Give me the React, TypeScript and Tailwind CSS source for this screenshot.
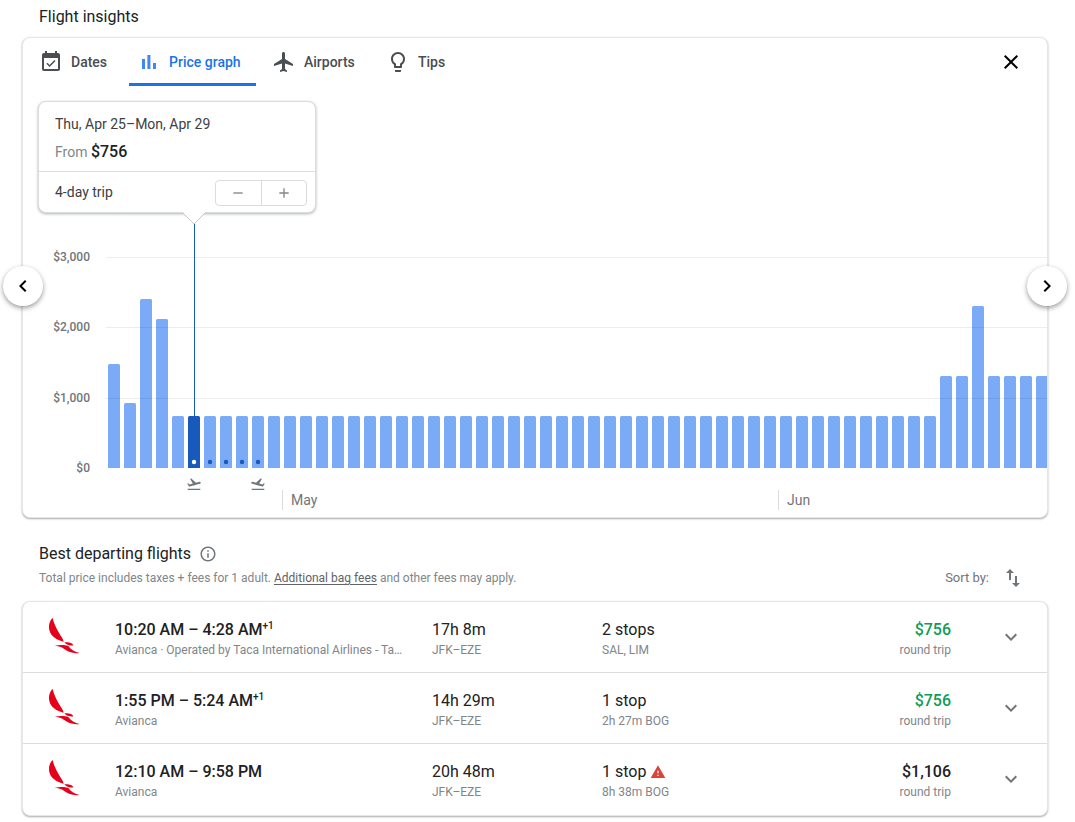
import React from "react";
import {
  MdAdd,
  MdChevronLeft,
  MdChevronRight,
  MdClose,
  MdEventAvailable,
  MdExpandMore,
  MdFlight,
  MdFlightTakeoff,
  MdInfoOutline,
  MdLightbulbOutline,
  MdRemove,
  MdSwapVert,
  MdWarning,
} from "react-icons/md";

const BAR_PITCH = 16;
const SELECTED = 5;
const TRIP_DAYS = 4;
const CHART_HEIGHT = 244;

// Bar heights in pixels, one per departure day.
const bars: number[] = [
  104, 65, 169, 149,
  ...Array.from({ length: 48 }, () => 52),
  92, 92, 162, 92, 92, 92, 92,
];

const gridLines = [33, 103, 174];

function GraphIcon() {
  return (
    <svg width="24" height="24" viewBox="0 0 24 24" fill="#4285f4" aria-hidden="true">
      <path d="M5 9h3v10H5zM10.4 5h3v14h-3zM16 13h3v6h-3z" />
    </svg>
  );
}

const tabs = [
  { label: "Dates", icon: <MdEventAvailable size={24} />, width: "w-[90px]" },
  { label: "Price graph", icon: <GraphIcon />, active: true, width: "w-[127px]" },
  { label: "Airports", icon: <MdFlight size={24} />, width: "w-[106px]" },
  { label: "Tips", icon: <MdLightbulbOutline size={24} />, width: "w-[80px]" },
];

type Flight = {
  times: string;
  plus?: string;
  airline: string;
  duration: string;
  stops: string;
  detail: string;
  price: string;
  cheap?: boolean;
  warn?: boolean;
};

const flights: Flight[] = [
  {
    times: "10:20 AM – 4:28 AM",
    plus: "+1",
    airline: "Avianca · Operated by Taca International Airlines - Ta…",
    duration: "17h 8m",
    stops: "2 stops",
    detail: "SAL, LIM",
    price: "$756",
    cheap: true,
  },
  {
    times: "1:55 PM – 5:24 AM",
    plus: "+1",
    airline: "Avianca",
    duration: "14h 29m",
    stops: "1 stop",
    detail: "2h 27m BOG",
    price: "$756",
    cheap: true,
  },
  {
    times: "12:10 AM – 9:58 PM",
    airline: "Avianca",
    duration: "20h 48m",
    stops: "1 stop",
    detail: "8h 38m BOG",
    price: "$1,106",
    warn: true,
  },
];

function AviancaLogo() {
  return (
    <svg width="32" height="36" viewBox="0 0 96 108" fill="#e6001a" aria-hidden="true">
      <path d="M14 0C5 8 1 22 4 36C8 54 26 67 47 71C46 62 38 54 31 41C23 27 17 14 14 0Z" />
      <path d="M49 73C60 71 74 74 76 82C66 84 56 81 49 73Z" />
      <path d="M20 83C34 80 50 80 61 84C69 94 80 103 95 105C76 108 60 102 50 94C43 88 36 85 20 83Z" />
    </svg>
  );
}

function PriceChart() {
  return (
    <svg className="block w-full" height={CHART_HEIGHT} role="img" aria-label="Price graph">
      {bars.map((h, i) => (
        <path
          key={i}
          transform={`translate(${2 + i * BAR_PITCH} ${CHART_HEIGHT - h})`}
          d={`M0 ${h}V1.5Q0 0 1.5 0H10.5Q12 0 12 1.5V${h}Z`}
          fill={i === SELECTED ? "#185abc" : "#7baaf7"}
        />
      ))}
      {gridLines.map((y) => (
        <rect key={y} x="0" y={y} width="100%" height="1" fill="#000" fillOpacity="0.07" />
      ))}
      {Array.from({ length: TRIP_DAYS + 1 }, (_, i) => (
        <circle
          key={i}
          cx={8 + (SELECTED + i) * BAR_PITCH}
          cy={CHART_HEIGHT - 6}
          r="2.2"
          fill={i === 0 ? "#fff" : "#185abc"}
        />
      ))}
      <rect x={8 + SELECTED * BAR_PITCH} y="0" width="1" height={CHART_HEIGHT - 52} fill="#185abc" />
    </svg>
  );
}

function TripPopover() {
  return (
    <div className="absolute top-[63px] left-[15px] w-[278px] rounded-lg border border-[#dadce0] bg-white text-sm text-[#3c4043] shadow-[0_1px_3px_rgba(60,64,67,0.4)]">
      <div className="border-b border-[#dadce0] px-4 pt-3 pb-[9px]">
        <p className="leading-5">Thu, Apr 25–Mon, Apr 29</p>
        <p className="mt-2 leading-5 text-[#80868b]">
          From <span className="text-base leading-5 font-medium text-[#202124]">$756</span>
        </p>
      </div>
      <div className="flex h-10 items-center justify-between pr-2 pl-4">
        <span>4-day trip</span>
        <div className="mt-[2px] flex h-[26px] w-[92px] divide-x divide-[#dadce0] rounded border border-[#dadce0] text-[#80868b]">
          <button type="button" aria-label="Shorter trip" className="flex flex-1 items-center justify-center">
            <MdRemove size={16} />
          </button>
          <button type="button" aria-label="Longer trip" className="flex flex-1 items-center justify-center">
            <MdAdd size={16} />
          </button>
        </div>
      </div>
      <svg className="absolute top-full left-[142px]" width="26" height="13" viewBox="0 0 26 13" aria-hidden="true">
        <path d="M1 0L13 12L25 0" fill="#fff" stroke="#c4c7cb" />
        <path d="M1.5 -1H24.5V0.5H1.5Z" fill="#fff" />
      </svg>
    </div>
  );
}

const cardClass = "rounded-lg border border-[#e4e6e8] bg-white shadow-[0_1px_2px_rgba(60,64,67,0.45)]";
const navClass =
  "absolute top-[228px] flex size-10 items-center justify-center rounded-full bg-white text-black shadow-[0_2px_5px_rgba(0,0,0,0.4)]";

export default function App() {
  return (
    <main className="min-h-screen bg-white pr-[27px] pb-1 pl-[22px] font-['Roboto',sans-serif] text-[#202124]">
      <h2 className="pt-[5px] pb-2 pl-[17px] text-base leading-6">Flight insights</h2>

      <section className={`relative ${cardClass}`}>
        <div className="flex items-start justify-between pr-6 pl-2">
          <div role="tablist" className="flex gap-2">
            {tabs.map((t) => (
              <button
                key={t.label}
                type="button"
                role="tab"
                aria-selected={!!t.active}
                className={`flex h-12 items-center gap-2 border-b-3 pt-[3px] pl-2 text-sm font-medium whitespace-nowrap ${t.width} ${
                  t.active ? "border-[#1a73e8] text-[#1a73e8]" : "border-transparent text-[#4a4d51]"
                }`}
              >
                {t.icon}
                {t.label}
              </button>
            ))}
          </div>
          <button type="button" aria-label="Close" className="flex h-12 items-center text-black">
            <MdClose size={24} />
          </button>
        </div>

        <div className="mt-[138px] flex">
          <div className="flex w-[83px] shrink-0 flex-col justify-between pt-[23px] pr-4 text-right text-xs leading-5 font-medium text-[#70757a]">
            <span>$3,000</span>
            <span>$2,000</span>
            <span>$1,000</span>
            <span className="-mb-[10px]">$0</span>
          </div>
          <div className="min-w-0 flex-1 overflow-hidden">
            <PriceChart />
          </div>
        </div>
        <div className="ml-[83px] grid h-[49px] auto-cols-[16px] grid-flow-col grid-rows-[22px_20px] pt-2 text-[#70757a]">
          <MdFlightTakeoff size={16} className="col-start-6 row-start-1" />
          <MdFlightTakeoff size={16} className="col-start-10 row-start-1 -scale-x-100" />
          <span className="col-start-12 row-start-2 -mt-2 h-5 border-l border-[#dadce0] pl-2 text-sm leading-5">May</span>
          <span className="col-start-43 row-start-2 -mt-2 h-5 border-l border-[#dadce0] pl-2 text-sm leading-5">Jun</span>
        </div>

        <TripPopover />
        <button type="button" aria-label="Earlier dates" className={`-left-5 ${navClass}`}>
          <MdChevronLeft size={24} />
        </button>
        <button type="button" aria-label="Later dates" className={`-right-5 ${navClass}`}>
          <MdChevronRight size={24} />
        </button>
      </section>

      <div className="mt-6 flex items-end justify-between pr-[23px] pl-[17px]">
        <div>
          <h2 className="flex items-center gap-2 text-base leading-6">
            Best departing flights
            <MdInfoOutline size={18} className="text-[#70757a]" />
          </h2>
          <p className="mt-[2px] text-xs leading-5 text-[#80868b]">
            Total price includes taxes + fees for 1 adult.{" "}
            <a href="#bag-fees" className="text-[#5f6368] underline underline-offset-2">
              Additional bag fees
            </a>{" "}
            and other fees may apply.
          </p>
        </div>
        <button type="button" className="flex h-5 items-center gap-3 text-[13px] text-[#70757a]">
          Sort by:
          <MdSwapVert size={24} />
        </button>
      </div>

      <ul className={`mt-[13px] divide-y divide-[#dadce0] ${cardClass}`}>
        {flights.map((f) => (
          <li
            key={f.times}
            className="grid h-[71px] grid-cols-[92px_minmax(0,317fr)_minmax(0,170fr)_minmax(0,349fr)_96px] pt-4"
          >
            <div className="pl-[25px]">
              <AviancaLogo />
            </div>
            <div className="pr-3">
              <p className="text-base leading-6 font-medium">
                {f.times}
                {f.plus && <sup className="-top-[6px] text-[10px]">{f.plus}</sup>}
              </p>
              <p className="text-xs leading-4 text-[#80868b]">{f.airline}</p>
            </div>
            <div>
              <p className="text-base leading-6">{f.duration}</p>
              <p className="text-xs leading-4 text-[#80868b]">JFK–EZE</p>
            </div>
            <div className="flex justify-between">
              <div>
                <p className="flex items-center gap-1 text-base leading-6">
                  {f.stops}
                  {f.warn && <MdWarning size={16} className="text-[#db4437]" aria-label="Long layover" />}
                </p>
                <p className="text-xs leading-4 text-[#80868b]">{f.detail}</p>
              </div>
              <div className="text-right">
                <p className={`text-base leading-6 font-medium ${f.cheap ? "text-[#0f9d58]" : ""}`}>{f.price}</p>
                <p className="text-xs leading-4 text-[#80868b]">round trip</p>
              </div>
            </div>
            <button type="button" aria-label="Flight details" className="mr-6 h-[38px] justify-self-end text-[#70757a]">
              <MdExpandMore size={24} />
            </button>
          </li>
        ))}
      </ul>
    </main>
  );
}
